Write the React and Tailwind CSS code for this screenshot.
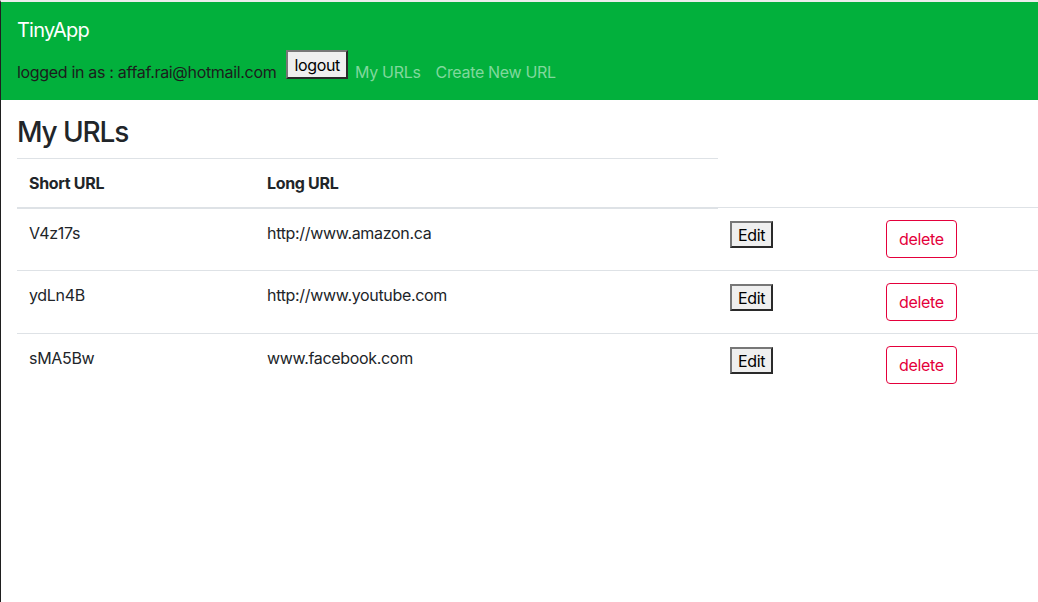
export default function App() {
  const rows = [
    { s: "V4z17s", l: "http://www.amazon.ca" },
    { s: "ydLn4B", l: "http://www.youtube.com" },
    { s: "sMA5Bw", l: "www.facebook.com" },
  ];
  const font = { fontFamily: "Inter, 'Noto Sans', sans-serif" };
  return (
    <div
      className="w-[1038px] h-[602px] overflow-hidden bg-white border-l border-[#1f1f1f] border-t-2 border-t-[#ececec] text-[#212529] tracking-[-0.02em]"
      style={font}
    >
      <header className="bg-[#02b03c] h-[98px] pl-4 pt-[13px]">
        <div className="text-[20px] leading-[30px] text-white tracking-[-0.04em]">TinyApp</div>
        <div className="flex items-start mt-[5px]">
          <span className="mt-[10px] text-[16px] leading-[24px] text-[#1c1c1c]">
            logged in as : affaf.rai@hotmail.com
          </span>
          <button className="ml-[10px] h-[29px] px-[6px] bg-[#efefef] text-black text-[16px] leading-[20px] border-2 border-t-[#777] border-l-[#777] border-r-[#2a2a2a] border-b-[#2a2a2a]">
            logout
          </button>
          <a className="ml-[7px] mt-[10px] text-[16px] leading-[24px] text-[#80d89d]">My URLs</a>
          <a className="ml-[15px] mt-[10px] text-[16px] leading-[24px] text-[#80d89d]">Create New URL</a>
        </div>
      </header>
      <main className="pl-4">
        <h3 className="mt-4 mb-2 text-[28px] leading-[1.2] font-medium tracking-[-0.04em]">My URLs</h3>
        <table className="table-fixed w-[1021px] border-collapse text-[16px] leading-[24px]">
          <colgroup>
            <col className="w-[238px]" />
            <col className="w-[463px]" />
            <col className="w-[156px]" />
            <col className="w-[164px]" />
          </colgroup>
          <thead>
            <tr>
              <th className="text-left font-bold align-bottom p-3 border-t border-b-2 border-[#dee2e6]">Short URL</th>
              <th className="text-left font-bold align-bottom p-3 border-t border-b-2 border-[#dee2e6]">Long URL</th>
            </tr>
          </thead>
          <tbody>
            {rows.map((r) => (
              <tr key={r.s}>
                <td className="align-top p-3 border-t border-[#dee2e6]">{r.s}</td>
                <td className="align-top p-3 border-t border-[#dee2e6]">{r.l}</td>
                <td className="align-top p-3 border-t border-[#dee2e6]">
                  <button className="block mt-[1px] h-[27px] px-[6px] bg-[#efefef] text-black text-[16px] leading-[20px] border-2 border-t-[#777] border-l-[#777] border-r-[#2a2a2a] border-b-[#2a2a2a]">
                    Edit
                  </button>
                </td>
                <td className="align-top p-3 border-t border-[#dee2e6]">
                  <button className="block h-[38px] px-3 rounded-[4px] border border-[#e4003b] text-[#e4003b] text-[16px] leading-[24px] bg-white">
                    delete
                  </button>
                </td>
              </tr>
            ))}
          </tbody>
        </table>
      </main>
    </div>
  );
}
